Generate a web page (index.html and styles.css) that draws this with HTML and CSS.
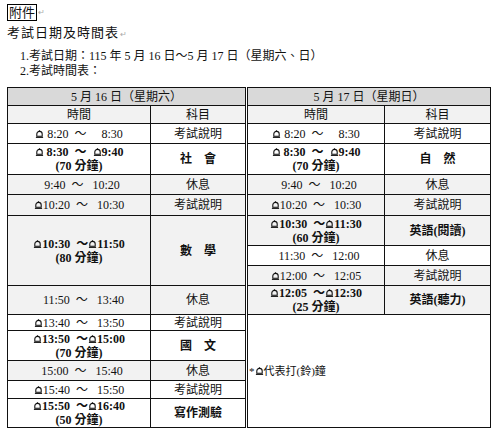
FILE: index.html
```html
<!DOCTYPE html>
<html lang="zh-Hant">
<head>
<meta charset="utf-8">
<link rel="stylesheet" href="styles.css">
</head>
<body>
<svg width="0" height="0" class="defs">
  <defs>
    <symbol id="bell" viewBox="0 0 10 10">
      <path d="M2 7 L2 4.5 C2 2.5 3.3 1.5 5 1.5 C6.7 1.5 8 2.5 8 4.5 L8 7 Z" fill="none" stroke="currentColor" stroke-width="1.2"/>
      <path d="M1 8.2 H9" stroke="currentColor" stroke-width="1.2"/>
      <path d="M4.3 1.4 A0.7 0.7 0 0 1 5.7 1.4" fill="none" stroke="currentColor" stroke-width="1"/>
    </symbol>
  </defs>
</svg>
<div class="doc">
  <div class="att"><span class="box">附件</span><span class="ret">↵</span></div>
  <div class="title">考試日期及時間表<span class="ret">↵</span></div>
  <div class="items">
    <div class="item">1.考試日期：115 年 5 月 16 日～5 月 17 日（星期六、日）</div>
    <div class="item">2.考試時間表：</div>
  </div>
  <div class="tables">
    <table class="t tl">
      <colgroup><col class="c1l"><col class="c2l"></colgroup>
      <tr class="h18 hd"><td colspan="2">5 月 16 日（星期六）</td></tr>
      <tr class="h18 sub"><td>時間</td><td>科目</td></tr>
      <tr class="h20"><td class="tm"><svg class="b"><use href="#bell"/></svg> 8:20  ～     8:30</td><td>考試說明</td></tr>
      <tr class="h31 bd"><td class="tm"><svg class="b"><use href="#bell"/></svg> 8:30  ～  <svg class="b"><use href="#bell"/></svg>9:40<br>(70 分鐘)</td><td>社　會</td></tr>
      <tr class="h20 g"><td class="tm">  9:40  ～   10:20</td><td>休息</td></tr>
      <tr class="h21 g"><td class="tm"><svg class="b"><use href="#bell"/></svg>10:20  ～   10:30</td><td>考試說明</td></tr>
      <tr class="h70 g bd"><td class="tm"><svg class="b"><use href="#bell"/></svg>10:30  ～<svg class="b"><use href="#bell"/></svg>11:50<br>(80 分鐘)</td><td>數　學</td></tr>
      <tr class="h29 g"><td class="tm">   11:50  ～   13:40</td><td>休息</td></tr>
      <tr class="h16"><td class="tm"><svg class="b"><use href="#bell"/></svg>13:40  ～   13:50</td><td>考試說明</td></tr>
      <tr class="h30 bd"><td class="tm"><svg class="b"><use href="#bell"/></svg>13:50  ～<svg class="b"><use href="#bell"/></svg>15:00<br>(70 分鐘)</td><td>國　文</td></tr>
      <tr class="h20 g"><td class="tm">  15:00  ～   15:40</td><td>休息</td></tr>
      <tr class="h18"><td class="tm"><svg class="b"><use href="#bell"/></svg>15:40  ～   15:50</td><td>考試說明</td></tr>
      <tr class="h29 bd"><td class="tm"><svg class="b"><use href="#bell"/></svg>15:50  ～<svg class="b"><use href="#bell"/></svg>16:40<br>(50 分鐘)</td><td>寫作測驗</td></tr>
    </table>
    <table class="t tr">
      <colgroup><col class="c1r"><col class="c2r"></colgroup>
      <tr class="h18 hd"><td colspan="2">5 月 17 日（星期日）</td></tr>
      <tr class="h18 sub"><td>時間</td><td>科目</td></tr>
      <tr class="h20"><td class="tm"><svg class="b"><use href="#bell"/></svg> 8:20  ～     8:30</td><td>考試說明</td></tr>
      <tr class="h31 bd"><td class="tm"><svg class="b"><use href="#bell"/></svg> 8:30  ～  <svg class="b"><use href="#bell"/></svg>9:40<br>(70 分鐘)</td><td>自　然</td></tr>
      <tr class="h20 g"><td class="tm">  9:40  ～   10:20</td><td>休息</td></tr>
      <tr class="h21 g"><td class="tm"><svg class="b"><use href="#bell"/></svg>10:20  ～   10:30</td><td>考試說明</td></tr>
      <tr class="h30 g bd"><td class="tm"><svg class="b"><use href="#bell"/></svg>10:30  ～<svg class="b"><use href="#bell"/></svg>11:30<br>(60 分鐘)</td><td>英語(閱讀)</td></tr>
      <tr class="h20"><td class="tm">  11:30  ～   12:00</td><td>休息</td></tr>
      <tr class="h20 g"><td class="tm"><svg class="b"><use href="#bell"/></svg>12:00  ～   12:05</td><td>考試說明</td></tr>
      <tr class="h29 g bd"><td class="tm"><svg class="b"><use href="#bell"/></svg>12:05  ～<svg class="b"><use href="#bell"/></svg>12:30<br>(25 分鐘)</td><td>英語(聽力)</td></tr>
      <tr class="h113"><td colspan="2" class="note">*<svg class="b"><use href="#bell"/></svg>代表打(鈴)鐘</td></tr>
    </table>
  </div>
</div>
</body>
</html>
```
FILE: styles.css
```css
html, body {
  margin: 0;
  padding: 0;
  background: #fff;
}
body {
  font-family: "Liberation Serif", "Noto Sans CJK TC", serif;
  color: #111;
  font-size: 12px;
}
.defs {
  position: absolute;
  width: 0;
  height: 0;
}
.doc {
  padding: 3px 0 0 7px;
}
.att {
  height: 18px;
  display: flex;
  align-items: center;
}
.box {
  border: 1px solid #000;
  font-size: 13px;
  line-height: 15px;
  padding: 0 1px;
}
.ret {
  color: #aaa;
  font-size: 8px;
  margin-left: 1px;
}
.title {
  margin-top: 4px;
  font-size: 13px;
  line-height: 16px;
  letter-spacing: 1px;
}
.items {
  margin-top: 6px;
  padding-left: 13px;
}
.item {
  line-height: 15px;
}
.tables {
  margin-top: 8px;
  display: flex;
  gap: 1px;
  align-items: flex-start;
}
.t {
  border-collapse: collapse;
  table-layout: fixed;
}
.tl { width: 238px; }
.tr { width: 243px; }
.c1l { width: 143px; }
.c2l { width: 95px; }
.c1r { width: 137px; }
.c2r { width: 106px; }
.t td {
  border: 1px solid #111;
  padding: 0;
  text-align: center;
  vertical-align: middle;
  line-height: 14px;
  overflow: hidden;
}
.tm {
  white-space: pre;
}
.hd td { background: #d9d9d9; }
.sub td { background: #f2f2f2; }
.g td { background: #f2f2f2; }
.bd td { font-weight: bold; }
.h16 { height: 16px; }
.h18 { height: 18px; }
.h20 { height: 20px; }
.h21 { height: 21px; }
.h29 { height: 29px; }
.h30 { height: 30px; }
.h31 { height: 31px; }
.h70 { height: 70px; }
.h113 { height: 113px; }
.b {
  width: 9px;
  height: 9px;
  vertical-align: -1px;
}
.bd .b use { stroke-width: 1.6; }
.t td.note {
  text-align: left;
  padding-left: 1px;
  font-size: 11px;
}
```
